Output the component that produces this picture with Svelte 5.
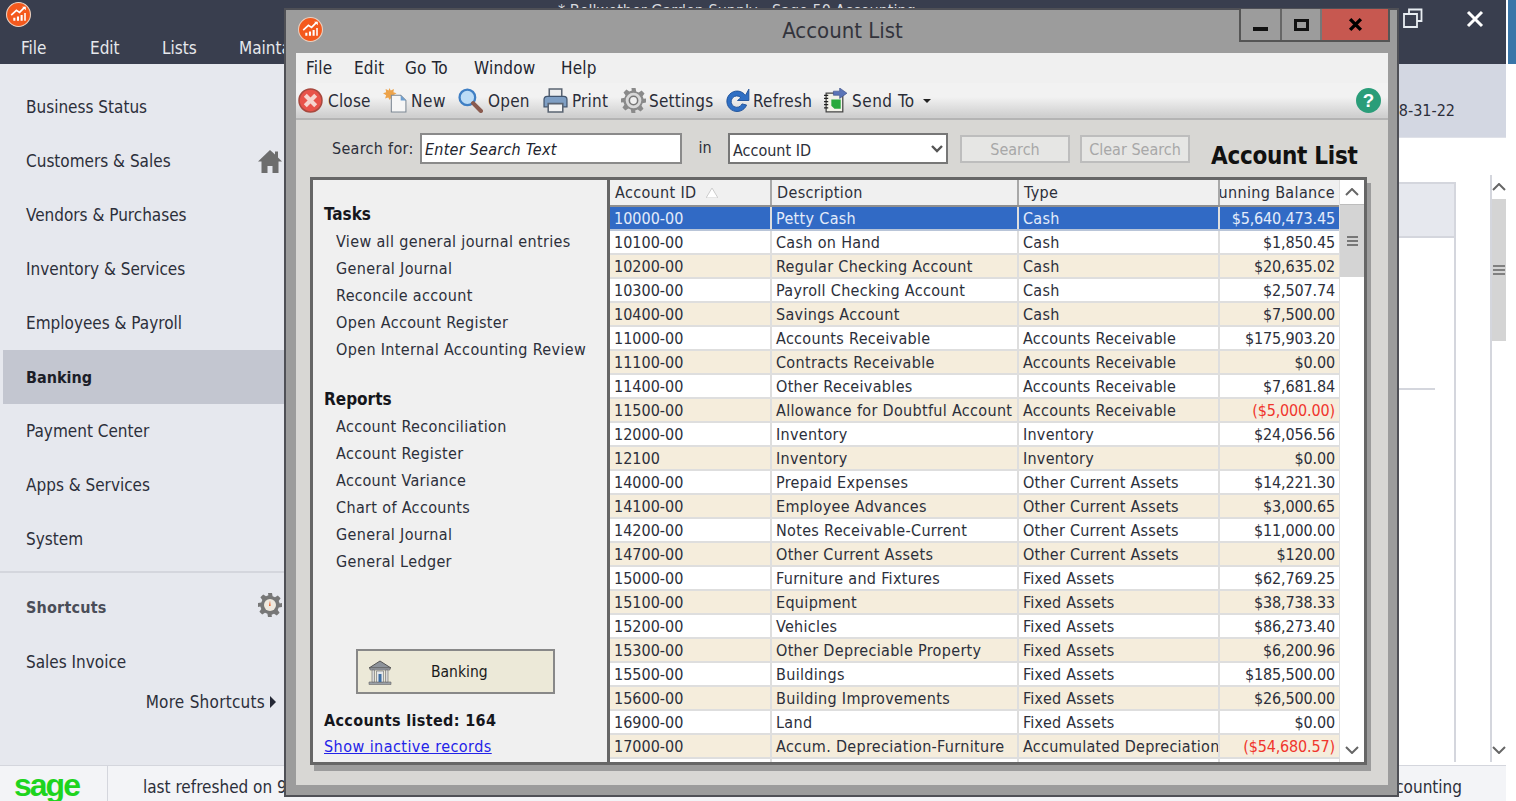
<script>
  const navItems = ['Business Status', 'Customers & Sales', 'Vendors & Purchases', 'Inventory & Services', 'Employees & Payroll', 'Banking', 'Payment Center', 'Apps & Services', 'System'];
  const tasks = ['View all general journal entries', 'General Journal', 'Reconcile account', 'Open Account Register', 'Open Internal Accounting Review'];
  const reports = ['Account Reconciliation', 'Account Register', 'Account Variance', 'Chart of Accounts', 'General Journal', 'General Ledger'];

  const ca = 'Cash';
  const ar = 'Accounts Receivable';
  const inv = 'Inventory';
  const oca = 'Other Current Assets';
  const fa = 'Fixed Assets';
  const rows = [
    ['10000-00', 'Petty Cash', ca, '$5,640,473.45'],
    ['10100-00', 'Cash on Hand', ca, '$1,850.45'],
    ['10200-00', 'Regular Checking Account', ca, '$20,635.02'],
    ['10300-00', 'Payroll Checking Account', ca, '$2,507.74'],
    ['10400-00', 'Savings Account', ca, '$7,500.00'],
    ['11000-00', 'Accounts Receivable', ar, '$175,903.20'],
    ['11100-00', 'Contracts Receivable', ar, '$0.00'],
    ['11400-00', 'Other Receivables', ar, '$7,681.84'],
    ['11500-00', 'Allowance for Doubtful Account', ar, '($5,000.00)'],
    ['12000-00', 'Inventory', inv, '$24,056.56'],
    ['12100', 'Inventory', inv, '$0.00'],
    ['14000-00', 'Prepaid Expenses', oca, '$14,221.30'],
    ['14100-00', 'Employee Advances', oca, '$3,000.65'],
    ['14200-00', 'Notes Receivable-Current', oca, '$11,000.00'],
    ['14700-00', 'Other Current Assets', oca, '$120.00'],
    ['15000-00', 'Furniture and Fixtures', fa, '$62,769.25'],
    ['15100-00', 'Equipment', fa, '$38,738.33'],
    ['15200-00', 'Vehicles', fa, '$86,273.40'],
    ['15300-00', 'Other Depreciable Property', fa, '$6,200.96'],
    ['15500-00', 'Buildings', fa, '$185,500.00'],
    ['15600-00', 'Building Improvements', fa, '$26,500.00'],
    ['16900-00', 'Land', fa, '$0.00'],
    ['17000-00', 'Accum. Depreciation-Furniture', 'Accumulated Depreciation', '($54,680.57)'],
    ['17100-00', 'Accum. Depreciation-Equipment', 'Accumulated Depreciation', '($33,138.70)']
  ];
</script>

{#snippet logo()}
  <svg class="logo" viewBox="0 0 24 24">
    <circle cx="12" cy="12" r="11.5" fill="#f4591d" stroke="#e9d3c4" stroke-width="1" />
    <path d="M5 12.5 10 8l3 2 5-5" fill="none" stroke="#fff" stroke-width="1.6" />
    <path d="M15.5 4.5H19V8z" fill="#fff" />
    <path d="M7 15h2v3H7zM10.5 14h2v4h-2zM14 12.5h2V18h-2zM17.500 10.500h1.500V18h-1.500z" fill="#fff" />
  </svg>
{/snippet}

<div class="app">
  <header class="appbar">
    <div class="appbar-top">
      {@render logo()}
      <span class="app-title">* Bellwether Garden Supply - Sage 50 Accounting</span>
      <svg class="restore" viewBox="0 0 20 20" fill="none" stroke="#e8edf2" stroke-width="1.8">
        <path d="M6 5V1.500h12.500V13H14" />
        <path d="M1 6h13v13H1z" />
      </svg>
      <svg class="app-close" viewBox="0 0 18 18" stroke="#fff" stroke-width="3"><path d="M2 2l14 14M16 2 2 16" /></svg>
    </div>
    <nav class="appmenu">
      <span>File</span><span>Edit</span><span>Lists</span><span>Maintain</span>
    </nav>
  </header>
  <div class="sliver"></div>

  <div class="middle">
    <aside class="sidebar">
      <ul class="nav">
        {#each navItems as item}
          <li class:active={item === 'Banking'}>
            {item}
            {#if item === 'Customers & Sales'}
              <svg class="home" viewBox="0 0 24 24" fill="#6d6d6d"><path d="M12 1 0 12.500h3.500V24h6v-7h5v7h6V12.500H24l-4-4V2.500h-3v3z" /></svg>
            {/if}
          </li>
        {/each}
      </ul>
      <div class="shortcuts">
        <div class="shortcuts-head">
          Shortcuts
          <svg class="cog" viewBox="0 0 24 24">
            <path d="M10 0h4l.6 3.300 2.400 1 2.800-1.900 2.800 2.800L20.700 8l1 2.400L24 10v4l-3.300.6-1 2.400 1.900 2.800-2.800 2.800-2.800-1.900-2.400 1L13.900 24H10l-.6-3.300-2.400-1-2.800 1.900-2.800-2.800L3.300 16l-1-2.400L0 14v-4l3.300-.6 1-2.400-1.900-2.800 2.800-2.800L8 3.300l2.400-1z" fill="#777" />
            <circle cx="12" cy="12" r="6" fill="#efe9df" />
            <path d="M12 7.500 11 13h1.600z" fill="#f0591d" />
          </svg>
        </div>
        <div class="shortcut">Sales Invoice</div>
        <div class="more">More Shortcuts <i class="more-caret"></i></div>
      </div>
    </aside>
    <main class="main">
      <div class="strip"><span>08-31-22</span></div>
      <div class="canvas">
        <div class="backpanel">
          <div class="backhead"></div>
          <div class="backline"></div>
        </div>
        <div class="backscroll">
          <div class="bs-up"><svg viewBox="0 0 14 8" fill="none" stroke="#666" stroke-width="2"><path d="M1 7l6-6 6 6" /></svg></div>
          <div class="bs-thumb"><i></i><i></i><i></i></div>
          <div class="bs-track"></div>
          <div class="bs-up"><svg viewBox="0 0 14 8" fill="none" stroke="#666" stroke-width="2"><path d="M1 1l6 6 6-6" /></svg></div>
        </div>
      </div>
    </main>
  </div>

  <footer class="statusbar">
    <div class="sage">sage</div>
    <div class="refreshed">last refreshed on 9/1/2022</div>
    <div class="product">Sage 50 Accounting</div>
  </footer>

  <section class="window">
    <div class="titlebar">
      <div class="title-logo">{@render logo()}</div>
      <h1>Account List</h1>
      <div class="winbtns">
        <button class="wb wb-min" aria-label="Minimize"><i></i></button>
        <button class="wb wb-max" aria-label="Maximize"><i></i></button>
        <button class="wb wb-close" aria-label="Close">
          <svg viewBox="0 0 14 14" stroke="#000" stroke-width="3.200"><path d="M2 2l10 10M12 2 2 12" /></svg>
        </button>
      </div>
    </div>

    <div class="winbody">
      <nav class="menubar">
        <span>File</span><span>Edit</span><span>Go To</span><span>Window</span><span>Help</span>
      </nav>

      <div class="toolbar">
        <div class="tool t-close">
          <svg viewBox="0 0 24 24">
            <circle cx="12" cy="12" r="11" fill="#e8534a" stroke="#a8493f" stroke-width="1.500" />
            <path d="M7 7l10 10M17 7 7 17" stroke="#f6d5cf" stroke-width="4" />
          </svg>
          Close
        </div>
        <div class="tool t-new">
          <svg viewBox="0 0 24 24">
            <path d="M6 0l1.500 2.500L10.500 1 10 4l3 1-3 2 1 3-3-1-1.500 2.500L5 9l-3 1 1-3-3-2 3-1-.5-3 3 1.500z" fill="#eda34a" />
            <path d="M8 7h9l5 5v11H8z" fill="#f6f6f6" stroke="#7c8793" />
            <path d="M17 7v5h5z" fill="#6f9fd0" />
          </svg>
          New
        </div>
        <div class="tool t-open">
          <svg viewBox="0 0 24 24">
            <circle cx="9" cy="9" r="7.500" fill="#bcdcf6" stroke="#3f7fc4" stroke-width="2.200" />
            <path d="M14.500 14.500 22 22" stroke="#8a5a4e" stroke-width="4" stroke-linecap="round" />
          </svg>
          Open
        </div>
        <div class="tool t-print">
          <svg viewBox="0 0 24 24">
            <path d="M6 1h12v8H6z" fill="#eee" stroke="#5a6472" stroke-width="1.500" />
            <path d="M1 11q0-3 3-3h16q3 0 3 3v7H1z" fill="#7f9fc4" stroke="#42556e" stroke-width="1.200" />
            <path d="M5 15h14v8H5z" fill="#f3f3f3" stroke="#5a6472" stroke-width="1.500" />
          </svg>
          Print
        </div>
        <div class="tool t-settings">
          <svg viewBox="0 0 24 24">
            <path d="M10 0h4l.6 3.300 2.400 1 2.800-1.900 2.800 2.800L20.700 8l1 2.400L24 10v4l-3.300.6-1 2.400 1.900 2.800-2.800 2.800-2.800-1.900-2.400 1L13.900 24H10l-.6-3.300-2.400-1-2.800 1.900-2.800-2.800L3.300 16l-1-2.400L0 14v-4l3.300-.6 1-2.400-1.900-2.800 2.800-2.800L8 3.300l2.400-1z" fill="#8a8a8a" />
            <circle cx="12" cy="12" r="7.500" fill="#d9d9d9" />
            <circle cx="12" cy="12" r="4" fill="#f0f0f0" stroke="#777" stroke-width="1.500" />
          </svg>
          Settings
        </div>
        <div class="tool t-refresh">
          <svg viewBox="2 1 22 22">
            <path d="M20 7.500A9 9 0 1 0 21 16l-4-1a5 5 0 1 1-1-5.500l-3 2.500h10V2z" fill="#2f6fc4" stroke="#1d4f97" stroke-width=".8" />
          </svg>
          Refresh
        </div>
        <div class="tool t-send">
          <svg viewBox="0 0 24 24">
            <path d="M3 5h16v18H3z" fill="#f3f3ea" stroke="#444" stroke-width="1.200" />
            <path d="M1 7h4M1 10h4M1 13h4M1 16h4M1 19h4" stroke="#222" stroke-width="1.200" />
            <path d="M8 11h9v9H11l-3-3z" fill="#27a93c" />
            <path d="M10 3h6V0l7 5-7 5V7h-6z" fill="#5b74b8" stroke="#3a4d86" stroke-width=".6" />
          </svg>
          Send To
          <i class="caret"></i>
        </div>
        <svg class="help" viewBox="0 0 24 24">
          <circle cx="12" cy="12" r="12" fill="#2a9d79" />
          <text x="12" y="18" text-anchor="middle" fill="#fff" font-size="18" font-weight="700" font-family="Liberation Sans, sans-serif">?</text>
        </svg>
      </div>

      <div class="searchrow">
        <label for="search-text">Search for:</label>
        <input id="search-text" class="search-input" value="Enter Search Text" />
        <span class="in">in</span>
        <div class="select"><span>Account ID</span>
          <svg viewBox="0 0 12 8" fill="none" stroke="#555" stroke-width="2.400"><path d="M1 1l5 5 5-5" /></svg>
        </div>
        <button class="disabled-btn search-btn">Search</button>
        <button class="disabled-btn clear-btn">Clear Search</button>
        <h2>Account List</h2>
      </div>

      <div class="panes">
        <div class="tasks">
          <h3>Tasks</h3>
          <ul>
            {#each tasks as t}<li>{t}</li>{/each}
          </ul>
          <h3 class="reports-head">Reports</h3>
          <ul>
            {#each reports as r}<li>{r}</li>{/each}
          </ul>
          <div class="bank-btn">
            <svg viewBox="0 0 26 26">
              <path d="M13 2 24 9H2z" fill="#8d939b" stroke="#555" />
              <path d="M3 9h20v2H3zM2 23h22v2.500H2z" fill="#9aa0a8" stroke="#666" stroke-width=".6" />
              <path d="M5 11h2.500v12H5zM18.500 11H21v12h-2.500z" fill="#d9d9d9" stroke="#666" stroke-width=".6" />
              <path d="M9.500 12h7v11h-7z" fill="#e4e6e8" stroke="#666" stroke-width=".6" />
              <path d="M11.500 15h3v8h-3z" fill="#3f6ea3" />
            </svg>
            <span>Banking</span>
          </div>
          <div class="listed">Accounts listed: 164</div>
          <a class="inactive" href="#inactive">Show inactive records</a>
        </div>

        <div class="grid">
          <div class="table">
            <div class="row head">
              <div class="cell c-id">Account ID <svg class="sort" viewBox="0 0 12 10"><path d="M6 0l6 10H0z" fill="#fff" stroke="#ccc" /></svg></div>
              <div class="cell c-desc">Description</div>
              <div class="cell c-type">Type</div>
              <div class="cell c-bal">Running Balance</div>
            </div>
            <div class="tbody">
              {#each rows as row, i}
                <div class="row data" class:selected={i === 0}>
                  <div class="cell c-id">{row[0]}</div>
                  <div class="cell c-desc">{row[1]}</div>
                  <div class="cell c-type">{row[2]}</div>
                  <div class="cell c-bal" class:neg={row[3].startsWith('(')}>{row[3]}</div>
                </div>
              {/each}
            </div>
          </div>
          <div class="vscroll">
            <div class="vs-btn"><svg viewBox="0 0 14 8" fill="none" stroke="#666" stroke-width="2"><path d="M1 7l6-6 6 6" /></svg></div>
            <div class="vs-thumb"><i></i><i></i><i></i></div>
            <div class="vs-track"></div>
            <div class="vs-btn"><svg viewBox="0 0 14 8" fill="none" stroke="#666" stroke-width="2"><path d="M1 1l6 6 6-6" /></svg></div>
          </div>
        </div>
      </div>
    </div>
  </section>
</div>

<style>
  :global(body) {
    margin: 0;
    background: #fff;
  }

  .app {
    position: relative;
    width: 1516px;
    height: 801px;
    overflow: hidden;
    display: flex;
    flex-direction: column;
    font-family: "DejaVu Sans Condensed", "DejaVu Sans", sans-serif;
    font-stretch: condensed;
    font-size: 17px;
    color: #2c2f3a;
  }

  button {
    font: inherit;
    padding: 0;
  }

  ul {
    list-style: none;
    margin: 0;
    padding: 0;
  }

  /* app chrome */
  .appbar {
    width: 1506px;
    height: 64px;
    flex: none;
    background: #393e4e;
    box-sizing: border-box;
    color: #e6e8ec;
  }
  .appbar-top {
    height: 34px;
    display: flex;
    align-items: flex-start;
    padding: 2px 0 0 6px;
    box-sizing: border-box;
  }
  .logo {
    width: 25px;
    height: 25px;
    flex: none;
    display: block;
  }
  .app-title {
    margin: 0 0 0 527px;
    width: 400px;
    font-size: 16px;
    line-height: 18px;
    color: #d8dade;
    white-space: nowrap;
  }
  .restore {
    width: 20px;
    height: 20px;
    margin: 6px 0 0 445px;
    flex: none;
  }
  .app-close {
    width: 18px;
    height: 18px;
    margin: 8px 0 0 43px;
    flex: none;
  }
  .appmenu {
    display: flex;
    padding: 4px 0 0 21px;
  }
  .appmenu span {
    width: 69px;
  }
  .appmenu span:nth-child(2) { width: 72px; }
  .appmenu span:nth-child(3) { width: 77px; }
  .sliver {
    position: absolute;
    left: 1508px;
    top: 0;
    width: 8px;
    height: 64px;
    background: #3a76a8;
  }

  .middle {
    flex: 1;
    display: flex;
    width: 1506px;
    min-height: 0;
  }

  /* left navigation */
  .sidebar {
    width: 284px;
    flex: none;
    background: #e6e8ee;
    padding-top: 16px;
    box-sizing: border-box;
  }
  .nav li {
    position: relative;
    height: 54px;
    box-sizing: border-box;
    margin-left: 3px;
    padding: 0 0 0 23px;
    display: flex;
    align-items: center;
    justify-content: space-between;
  }
  .nav li.active {
    background: #c3c6d0;
    font-size: 16px;
    font-weight: 700;
    color: #1c1e28;
  }
  .home {
    width: 24px;
    height: 24px;
    flex: none;
    margin-right: 2px;
  }
  .shortcuts {
    margin-top: 5px;
    border-top: 2px solid #d4d6dd;
    padding: 22px 2px 0 26px;
  }
  .shortcuts-head {
    display: flex;
    justify-content: space-between;
    align-items: center;
    font-size: 16px;
    letter-spacing: .2px;
    font-weight: 700;
    color: #4a4d58;
    height: 24px;
  }
  .cog {
    width: 24px;
    height: 24px;
    margin-top: -5px;
  }
  .shortcut {
    margin-top: 31px;
    line-height: 24px;
  }
  .more {
    margin-top: 16px;
    padding-right: 6px;
    display: flex;
    justify-content: flex-end;
    align-items: center;
    gap: 5px;
    line-height: 24px;
    letter-spacing: .25px;
  }
  .more-caret {
    width: 0;
    height: 0;
    border-left: 6px solid #252835;
    border-top: 6px solid transparent;
    border-bottom: 6px solid transparent;
  }

  /* what is visible of the page behind the window */
  .main {
    flex: 1;
    display: flex;
    flex-direction: column;
    background: #fff;
    min-width: 0;
  }
  .strip {
    height: 74px;
    flex: none;
    background: #d3d7e2;
    border-bottom: 1px solid #dfe1e8;
    box-sizing: border-box;
    display: flex;
    align-items: flex-end;
    justify-content: flex-end;
    padding: 0 51px 17px 0;
    font-size: 16px;
  }
  .canvas {
    flex: 1;
    display: flex;
    justify-content: flex-end;
    padding: 37px 0 3px;
    min-height: 0;
  }
  .backpanel {
    width: 300px;
    margin-top: 7px;
    margin-right: 34px;
    border: solid #d4d6dd;
    border-width: 2px 2px 0 0;
    position: relative;
  }
  .backhead {
    height: 52px;
    background: #e6e8ee;
    border-bottom: 2px solid #d4d6dd;
  }
  .backline {
    position: absolute;
    right: 19px;
    top: 204px;
    width: 100px;
    height: 2px;
    background: #d4d6dd;
  }
  .backscroll {
    width: 16px;
    box-sizing: border-box;
    display: flex;
    flex-direction: column;
    border-left: 2px solid #d4d6dd;
  }
  .bs-up {
    height: 24px;
    flex: none;
    display: flex;
    align-items: center;
    justify-content: center;
    background: #fff;
  }
  .bs-up svg {
    width: 14px;
    height: 8px;
  }
  .bs-thumb {
    height: 142px;
    flex: none;
    background: #d4d4d4;
    display: flex;
    flex-direction: column;
    align-items: center;
    justify-content: center;
    gap: 2px;
  }
  .bs-thumb i {
    width: 12px;
    height: 2px;
    background: #808080;
  }
  .bs-track {
    flex: 1;
    background: #fff;
  }

  .statusbar {
    width: 1506px;
    height: 36px;
    flex: none;
    background: #f3f4f7;
    border-top: 1px solid #d4d6dd;
    box-sizing: border-box;
    display: flex;
    align-items: center;
  }
  .sage {
    width: 108px;
    height: 100%;
    box-sizing: border-box;
    padding-left: 14px;
    border-right: 1px solid #d4d6dd;
    font-family: "Liberation Sans", sans-serif;
    font-size: 32px;
    line-height: 39px;
    font-weight: 700;
    letter-spacing: -2px;
    color: #1ed41e;
  }
  .refreshed {
    margin-left: 35px;
    padding-top: 7px;
    white-space: nowrap;
  }
  .product {
    margin-left: auto;
    margin-right: 44px;
    padding-top: 7px;
  }

  /* the floating window */
  .window {
    position: absolute;
    left: 284px;
    top: 8px;
    width: 1115px;
    height: 789px;
    box-sizing: border-box;
    background: #9c9c9c;
    border: 2px solid #4f5056;
    padding: 0 9px 10px 10px;
    display: flex;
    flex-direction: column;
    font-size: 16px;
  }
  .titlebar {
    height: 43px;
    flex: none;
    display: grid;
    grid-template-columns: 1fr auto 1fr;
    align-items: start;
    margin: 0 -1px 0 0;
  }
  .title-logo {
    padding: 7px 0 0 2px;
  }
  .titlebar h1 {
    margin: 8px 0 0;
    font-size: 22px;
    line-height: 26px;
    font-weight: 400;
    color: #33343c;
  }
  .winbtns {
    justify-self: end;
    display: flex;
    margin-top: -1px;
    margin-right: -1px;
    height: 31px;
    border: solid #555;
    border-width: 0 2px 2px 2px;
    box-sizing: content-box;
  }
  .wb {
    border: 0;
    background: #9c9c9c;
    display: flex;
    align-items: center;
    justify-content: center;
  }
  .wb-min { width: 41px; border-right: 2px solid #666; }
  .wb-min i { width: 15px; height: 4px; background: #111; margin-top: 8px; }
  .wb-max { width: 40px; border-right: 2px solid #777; }
  .wb-max i { width: 9px; height: 6px; border: 3px solid #111; }
  .wb-close { width: 66px; background: #c75850; }
  .wb-close svg { width: 15px; height: 15px; }

  .winbody {
    flex: 1;
    background: #d8d7d4;
    display: flex;
    flex-direction: column;
    min-height: 0;
  }
  .menubar {
    height: 30px;
    flex: none;
    background: #f0f0f0;
    display: flex;
    align-items: center;
    padding-left: 10px;
    font-size: 17px;
    letter-spacing: .2px;
    color: #23252f;
  }
  .menubar span:nth-child(1) { width: 48px; }
  .menubar span:nth-child(2) { width: 51px; }
  .menubar span:nth-child(3) { width: 69px; }
  .menubar span:nth-child(4) { width: 87px; }

  .toolbar {
    height: 37px;
    flex: none;
    box-sizing: border-box;
    background: linear-gradient(#f2f2f2 0%, #f2f2f2 40%, #cfcfcf 95%);
    border-bottom: 2px solid #b4b4b4;
    display: flex;
    align-items: center;
    padding: 0 7px 0 2px;
    font-size: 17px;
    letter-spacing: .2px;
    color: #2b2d38;
  }
  .tool {
    display: flex;
    align-items: center;
    gap: 5px;
    white-space: nowrap;
  }
  .tool svg {
    width: 25px;
    height: 25px;
    flex: none;
  }
  .t-close { width: 85px; }
  .t-new { width: 75px; gap: 3px; letter-spacing: .6px; }
  .t-open { width: 85px; }
  .t-print { width: 78px; gap: 4px; }
  .t-settings { width: 104px; gap: 3px; }
  .t-refresh { width: 98px; gap: 3px; }
  .t-send { gap: 4px; letter-spacing: .5px; }
  .caret {
    width: 0;
    height: 0;
    margin-left: 4px;
    border-top: 4px solid #222;
    border-left: 4px solid transparent;
    border-right: 4px solid transparent;
  }
  .help {
    width: 25px;
    height: 25px;
    margin-left: auto;
  }

  .searchrow {
    height: 57px;
    flex: none;
    display: flex;
    align-items: flex-start;
    font-size: 16px;
    padding: 13px 0 0 36px;
    box-sizing: border-box;
  }
  .searchrow label {
    width: 88px;
    line-height: 32px;
    letter-spacing: .3px;
  }
  .search-input {
    width: 262px;
    height: 31px;
    box-sizing: border-box;
    border: 2px solid #8a8a8a;
    background: #fff;
    padding: 1px 3px 0;
    font: italic 16px "DejaVu Sans Condensed", "DejaVu Sans", sans-serif;
    font-stretch: condensed;
    letter-spacing: .25px;
    color: #22242e;
    outline: none;
  }
  .in {
    width: 46px;
    text-align: center;
    line-height: 30px;
  }
  .select {
    width: 220px;
    height: 31px;
    box-sizing: border-box;
    border: 2px solid #777;
    background: #fff;
    padding-left: 3px;
    display: flex;
    align-items: center;
    justify-content: space-between;
  }
  .select span {
    padding-top: 3px;
  }
  .select svg {
    width: 12px;
    height: 8px;
    margin-right: 3px;
  }
  .disabled-btn {
    height: 28px;
    margin-top: 2px;
    border: 2px solid #bdbdbd;
    background: #e6e6e4;
    color: #a8a8a8;
    box-sizing: border-box;
  }
  .search-btn { width: 110px; margin-left: 12px; }
  .clear-btn { width: 110px; margin-left: 10px; }
  .searchrow h2 {
    margin: 8px 0 0 21px;
    font-size: 24px;
    line-height: 30px;
    font-weight: 700;
    letter-spacing: -.3px;
    color: #111;
    white-space: nowrap;
  }

  .panes {
    display: flex;
    height: 588px;
    flex: none;
    margin-left: 14px;
    width: 1057px;
    box-shadow: 4px 6px 0 #9c9c9c;
  }
  .tasks {
    width: 300px;
    flex: none;
    box-sizing: border-box;
    border: 3px solid #666;
    background: #f0f0f0;
    padding: 22px 0 0 11px;
    position: relative;
    font-size: 16px;
    letter-spacing: .35px;
    color: #2c2f3a;
  }
  .tasks h3 {
    margin: 0;
    font-size: 17px;
    line-height: 24px;
    font-weight: 700;
    letter-spacing: 0;
    color: #15161c;
  }
  .tasks li {
    height: 27px;
    line-height: 27px;
    padding-left: 12px;
    white-space: nowrap;
  }
  .tasks ul {
    margin-top: 2px;
  }
  .tasks .reports-head {
    margin-top: 24px;
  }
  .bank-btn {
    width: 199px;
    height: 45px;
    box-sizing: border-box;
    margin: 74px 0 0 32px;
    border: 2px solid #888;
    background: #ece9d8;
    display: flex;
    align-items: center;
    padding-left: 9px;
    font-size: 15.500px;
    letter-spacing: 0;
    color: #1a1a1a;
  }
  .bank-btn svg {
    width: 26px;
    height: 26px;
  }
  .bank-btn span {
    margin-left: 38px;
  }
  .listed {
    margin-top: 15px;
    font-weight: 700;
    line-height: 24px;
    color: #15161c;
  }
  .inactive {
    display: block;
    margin-top: 2px;
    line-height: 24px;
    letter-spacing: .45px;
    color: #2323e8;
  }

  .grid {
    flex: 1;
    display: flex;
    min-width: 0;
    box-sizing: border-box;
    border: solid #666;
    border-width: 3px 3px 3px 0;
    background: #fff;
  }
  .table {
    flex: 1;
    display: flex;
    flex-direction: column;
    min-width: 0;
    overflow: hidden;
  }
  .tbody {
    flex: 1;
    overflow: hidden;
  }
  .row {
    display: flex;
    height: 24px;
    box-sizing: border-box;
    border-bottom: 2px solid #dedede;
  }
  .row.head {
    height: 27px;
    flex: none;
    background: #f0f0f0;
    border-bottom: 2px solid #8f8f8f;
    letter-spacing: .35px;
  }
  .row.data:nth-child(odd) {
    background: #f5eddc;
  }
  .row.data:nth-child(even) {
    background: #fff;
  }
  .row.data.selected {
    background: #316ac5;
    color: #e4ecfa;
    border-bottom-color: #b9c5d8;
  }
  .cell {
    height: 100%;
    flex: none;
    box-sizing: border-box;
    display: flex;
    align-items: center;
    padding: 0 4px 0 5px;
    border-right: 2px solid #dedede;
    white-space: nowrap;
    overflow: hidden;
  }
  .head .cell {
    border-right-color: #a8a8a8;
  }
  .c-id { width: 162px; padding-left: 4px; }
  .c-desc { width: 247px; padding-left: 4px; }
  .c-type { width: 201px; padding-left: 4px; }
  .data .c-desc {
    letter-spacing: .32px;
  }
  .data .c-type {
    letter-spacing: .25px;
  }
  .c-type.cell {
    padding-right: 0;
  }
  .head .c-id { padding-left: 5px; }
  .head .c-desc, .head .c-type { padding-left: 5px; }
  .c-bal {
    width: 119px;
    justify-content: flex-end;
    border-right: 0;
  }
  .data .c-bal {
    letter-spacing: -.15px;
  }
  .neg {
    color: #f0362c;
  }
  .sort {
    width: 12px;
    height: 10px;
    margin-left: 10px;
  }

  .vscroll {
    width: 25px;
    flex: none;
    box-sizing: border-box;
    border-left: 1px solid #dedede;
    display: flex;
    flex-direction: column;
  }
  .vs-btn {
    height: 24px;
    flex: none;
    display: flex;
    align-items: center;
    justify-content: center;
    background: #fff;
  }
  .vs-btn svg {
    width: 14px;
    height: 8px;
  }
  .vs-thumb {
    height: 73px;
    flex: none;
    background: #d4d4d4;
    border-top: 1px solid #bdbdbd;
    box-sizing: border-box;
    display: flex;
    flex-direction: column;
    align-items: center;
    justify-content: center;
    gap: 2px;
  }
  .vs-thumb i {
    width: 11px;
    height: 2px;
    background: #777;
  }
  .vs-track {
    flex: 1;
    background: #fff;
  }
</style>
